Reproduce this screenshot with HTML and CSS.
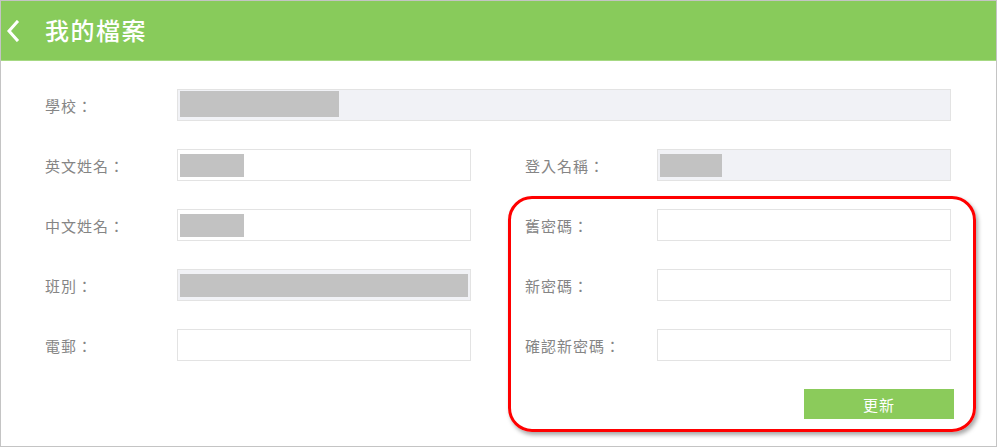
FILE: index.html
```html
<!DOCTYPE html>
<html lang="zh-Hant">
<head>
    <meta charset="UTF-8">
    <meta name="viewport" content="width=device-width, initial-scale=1.0">
    <title>我的檔案</title>
    <link rel="stylesheet" href="styles.css">
</head>
<body>
    <div class="frame">
        <div class="header">
            <span class="back-btn">
                <svg width="14" height="22" viewBox="0 0 14 22">
                    <path d="M11 2 L3 11 L11 20" fill="none" stroke="#fff" stroke-width="3" stroke-linecap="square"/>
                </svg>
            </span>
            <h1>我的檔案</h1>
        </div>

        <form class="profile-form">
            <label class="field-label">學校：</label>
            <div class="field field-wide field-disabled"><span class="redact" style="width: 159px"></span></div>

            <label class="field-label">英文姓名：</label>
            <div class="field"><span class="redact redact-sm" style="width: 64px"></span></div>
            <label class="field-label label-right">登入名稱：</label>
            <div class="field field-disabled"><span class="redact redact-sm" style="width: 62px"></span></div>

            <label class="field-label">中文姓名：</label>
            <div class="field"><span class="redact redact-sm" style="width: 64px"></span></div>
            <label class="field-label label-right">舊密碼：</label>
            <input class="field" type="password">

            <label class="field-label">班別：</label>
            <div class="field field-disabled"><span class="redact redact-sm" style="width: 289px"></span></div>
            <label class="field-label label-right">新密碼：</label>
            <input class="field" type="password">

            <label class="field-label">電郵：</label>
            <input class="field" type="text">
            <label class="field-label label-right">確認新密碼：</label>
            <input class="field" type="password">

            <button class="update-btn" type="button">更新</button>
        </form>

        <div class="highlight"></div>
    </div>
</body>
</html>
```

FILE: styles.css
```css
* {
    margin: 0;
    padding: 0;
    box-sizing: border-box;
}

body {
    font-family: 'Noto Sans CJK TC', 'Noto Sans', sans-serif;
    background: #fff;
}

.frame {
    position: relative;
    width: 997px;
    height: 447px;
    border: 1px solid #c4c4c4;
    overflow: hidden;
}

.header {
    display: flex;
    align-items: center;
    height: 60px;
    background: #88cb5b;
    border-bottom: 1px solid #a6d983;
    color: #fff;
}

.back-btn {
    display: flex;
    width: 44px;
    padding-left: 5px;
}

.header h1 {
    font-size: 24px;
    font-weight: 500;
    letter-spacing: 1.5px;
    line-height: 1;
    margin-top: -2px;
}

.profile-form {
    display: grid;
    grid-template-columns: 132px 294px 54px 132px 294px;
    grid-auto-rows: 32px;
    row-gap: 28px;
    padding: 28px 0 0 44px;
}

.field-label {
    grid-column: 1;
    display: flex;
    align-items: center;
    font-size: 15px;
    color: #858585;
    letter-spacing: 1px;
}

.label-right {
    grid-column: 4;
}

.field {
    display: flex;
    align-items: center;
    height: 32px;
    border: 1px solid #e3e3e3;
    background: #fff;
    padding: 1px 2px 3px 2px;
    font: inherit;
    outline: none;
}

.field-wide {
    grid-column: 2 / 6;
}

.field-disabled {
    background: #f1f2f6;
}

.redact {
    display: block;
    height: 100%;
    background: #c2c2c2;
}

.redact-sm {
    height: 23px;
    margin-top: 2px;
}

.update-btn {
    grid-column: 5;
    justify-self: end;
    width: 150px;
    height: 30px;
    margin-right: -3px;
    border: none;
    background: #8bcb5b;
    color: #fff;
    font-family: inherit;
    font-size: 15px;
    letter-spacing: 1px;
    cursor: pointer;
}

.highlight {
    position: absolute;
    left: 507px;
    top: 195px;
    width: 468px;
    height: 236px;
    border: 3px solid #ff0000;
    border-radius: 24px;
    box-shadow: 2px 3px 4px rgba(0, 0, 0, 0.35);
    pointer-events: none;
}
```
